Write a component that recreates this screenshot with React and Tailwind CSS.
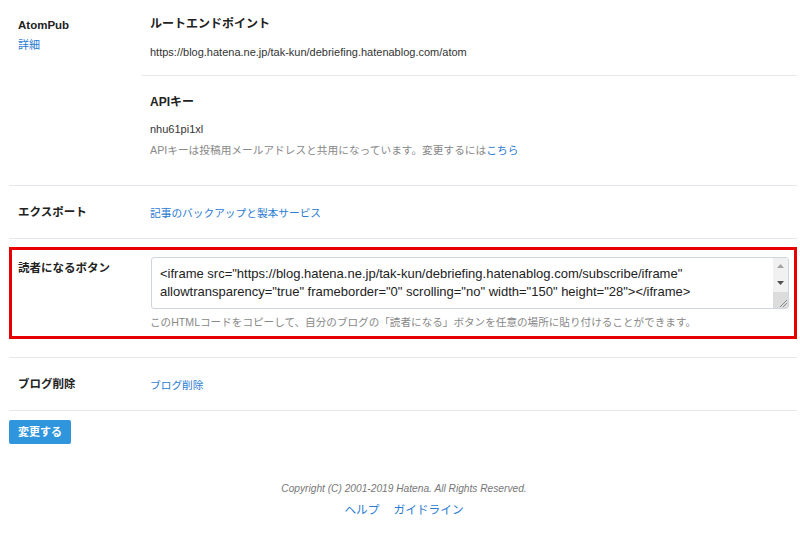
const base = "font-['Liberation_Sans','Noto_Sans_CJK_JP',sans-serif]";

function Row({ label, children, className = "" }) {
  return (
    <div className={`flex border-b border-[#e4e8ec] ${className}`}>
      <div className="w-[133px] shrink-0 pl-[9px] pt-[2px] text-[11.5px] font-bold text-[#222]">{label}</div>
      <div className="flex-1 pl-[8px]">{children}</div>
    </div>
  );
}

function FakeScrollbar() {
  return (
    <div className="flex w-[15px] flex-col bg-[#f1f1f1]">
      <div className="flex h-[16px] items-center justify-center">
        <svg width="7" height="4" viewBox="0 0 7 4"><path d="M0 4 L3.5 0 L7 4 Z" fill="#a3a3a3" /></svg>
      </div>
      <div className="flex h-[18px] items-center justify-center">
        <svg width="7" height="4" viewBox="0 0 7 4"><path d="M0 0 L3.5 4 L7 0 Z" fill="#505050" /></svg>
      </div>
      <div className="flex flex-1 items-end justify-end bg-[#dcdcdc]">
        <svg width="10" height="10" viewBox="0 0 10 10">
          <path d="M9 2 L2 9 M9 5 L5 9" stroke="#8a8a8a" strokeWidth="1" />
        </svg>
      </div>
    </div>
  );
}

export default function App() {
  return (
    <div className={`min-h-[535px] w-[800px] bg-white ${base} text-[#333]`}>
      <div className="pl-[9px] pr-[3px]">
        {/* AtomPub */}
        <div className="flex border-b border-[#e4e8ec]">
          <div className="w-[133px] shrink-0 pl-[9px] pt-[16px]">
            <p className="text-[11.5px] font-bold leading-[18px] text-[#222]">AtomPub</p>
            <p className="mt-[2px] text-[11px] leading-[18px] text-[#2b7bd3]">詳細</p>
          </div>
          <div className="flex-1">
            <div className="border-b border-[#e4e8ec] pb-[14px] pl-[8px] pt-[14px]">
              <h3 className="text-[12px] font-bold leading-[20px] text-[#222]">ルートエンドポイント</h3>
              <p className="mt-[9px] text-[11px] leading-[18px]">https://blog.hatena.ne.jp/tak-kun/debriefing.hatenablog.com/atom</p>
            </div>
            <div className="pb-[26px] pl-[8px] pt-[16px]">
              <h3 className="text-[12px] font-bold leading-[20px] text-[#222]">APIキー</h3>
              <p className="mt-[8px] text-[11px] leading-[18px]">nhu61pi1xl</p>
              <p className="mt-[3px] text-[10.7px] leading-[18px] text-[#888]">
                APIキーは投稿用メールアドレスと共用になっています。変更するには
                <span className="text-[#2b7bd3]">こちら</span>
              </p>
            </div>
          </div>
        </div>

        {/* Export */}
        <Row label="エクスポート" className="h-[53px] items-center">
          <span className="text-[10.7px] text-[#2b7bd3]">記事のバックアップと製本サービス</span>
        </Row>

        {/* Subscribe button (highlighted) */}
        <div className="border-b border-[#e4e8ec] pb-[18px] pt-[8px]">
          <div className="flex border-[3px] border-[#e60000] pb-[5px] pt-[7px]">
            <div className="w-[138px] shrink-0 pl-[6px] pt-[2px] text-[11.5px] font-bold leading-[18px] text-[#222]">
              読者になるボタン
            </div>
            <div className="flex-1 pr-[5px]">
              <div className="ml-[1px] flex h-[52px] rounded-[3px] border border-[#cfd5da] bg-white">
                <div className="flex-1 pl-[8px] pt-[7px] text-[13px] leading-[18px] text-[#222]">
                  <p>&lt;iframe src="https://blog.hatena.ne.jp/tak-kun/debriefing.hatenablog.com/subscribe/iframe"</p>
                  <p>allowtransparency="true" frameborder="0" scrolling="no" width="150" height="28"&gt;&lt;/iframe&gt;</p>
                </div>
                <FakeScrollbar />
              </div>
              <p className="mt-[4px] text-[10.6px] leading-[18px] text-[#888]">
                このHTMLコードをコピーして、自分のブログの「読者になる」ボタンを任意の場所に貼り付けることができます。
              </p>
            </div>
          </div>
        </div>

        {/* Delete */}
        <Row label="ブログ削除" className="h-[53px] items-center">
          <span className="text-[10.7px] text-[#2b7bd3]">ブログ削除</span>
        </Row>

        <div className="flex pt-[9px]">
          <button className="flex h-[24px] items-center rounded-[2px] bg-[#2f95dc] px-[9px] text-[11px] font-bold text-white">
            変更する
          </button>
        </div>

        <footer className="mt-[37px] flex flex-col items-center pl-[2px]">
          <p className="text-[10.2px] italic leading-[16px] text-[#777]">Copyright (C) 2001-2019 Hatena. All Rights Reserved.</p>
          <div className="mt-[4px] flex gap-[14px] text-[11.7px] leading-[18px] text-[#2b7bd3]">
            <span>ヘルプ</span>
            <span>ガイドライン</span>
          </div>
        </footer>
      </div>
    </div>
  );
}
